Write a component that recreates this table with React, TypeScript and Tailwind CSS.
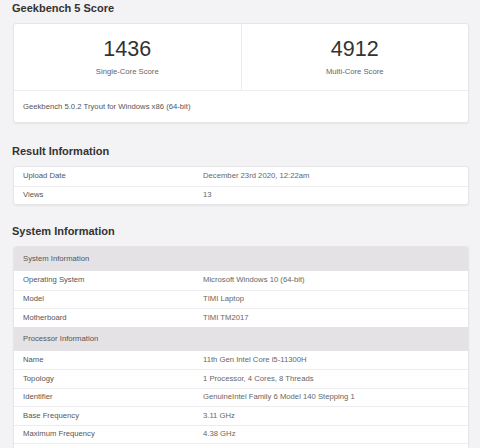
import React from 'react';

type Row = { label: string; value: string };

const resultRows: Row[] = [
  { label: 'Upload Date', value: 'December 23rd 2020, 12:22am' },
  { label: 'Views', value: '13' },
];

const systemRows: Row[] = [
  { label: 'Operating System', value: 'Microsoft Windows 10 (64-bit)' },
  { label: 'Model', value: 'TIMI Laptop' },
  { label: 'Motherboard', value: 'TIMI TM2017' },
];

const processorRows: Row[] = [
  { label: 'Name', value: '11th Gen Intel Core i5-11300H' },
  { label: 'Topology', value: '1 Processor, 4 Cores, 8 Threads' },
  { label: 'Identifier', value: 'GenuineIntel Family 6 Model 140 Stepping 1' },
  { label: 'Base Frequency', value: '3.11 GHz' },
  { label: 'Maximum Frequency', value: '4.38 GHz' },
];

const InfoRow: React.FC<{ row: Row; first?: boolean }> = ({ row, first }) => (
  <div
    className={`flex h-[18.5px] items-center text-[7.7px] text-[#555] ${
      first ? '' : 'border-t border-[#ececee]'
    }`}
  >
    <div className="w-[189px] shrink-0 pl-[9px]">{row.label}</div>
    <div className="flex-1 text-[#666]">{row.value}</div>
  </div>
);

const SectionHeader: React.FC<{ title: string }> = ({ title }) => (
  <div className="flex h-[24px] items-center bg-[#e4e2e4] pl-[9px] text-[7.7px] text-[#555]">
    {title}
  </div>
);

const Heading: React.FC<{ children: React.ReactNode }> = ({ children }) => (
  <h2 className="h-[16px] pl-[12px] text-[11px] leading-[16px] font-bold text-[#333]">{children}</h2>
);

const card =
  'mt-[7px] ml-[13px] mr-[11px] overflow-hidden rounded-[3px] border border-[#e6e5e8] bg-white shadow-[0_1px_2px_rgba(0,0,0,0.06)]';

export default function App() {
  return (
    <div
      className="h-[448px] w-[480px] overflow-hidden bg-[#f3f2f4]"
      style={{ fontFamily: '"Liberation Sans", Arial, sans-serif' }}
    >
      <Heading>Geekbench 5 Score</Heading>
      <div className={card}>
        <div className="flex h-[66px]">
          <div className="flex flex-1 flex-col items-center justify-center border-r border-[#ececee]">
            <div className="text-[21.5px] leading-[24px] text-[#333]">1436</div>
            <div className="mt-[5px] text-[7.7px] text-[#666]">Single-Core Score</div>
          </div>
          <div className="flex flex-1 flex-col items-center justify-center">
            <div className="text-[21.5px] leading-[24px] text-[#333]">4912</div>
            <div className="mt-[5px] text-[7.7px] text-[#666]">Multi-Core Score</div>
          </div>
        </div>
        <div className="flex h-[32px] items-center border-t border-[#ececee] pl-[9px] text-[7.7px] text-[#555]">
          Geekbench 5.0.2 Tryout for Windows x86 (64-bit)
        </div>
      </div>

      <div className="mt-[20px]">
        <Heading>Result Information</Heading>
      </div>
      <div className={card}>
        {resultRows.map((r, i) => (
          <InfoRow key={r.label} row={r} first={i === 0} />
        ))}
      </div>

      <div className="mt-[18px]">
        <Heading>System Information</Heading>
      </div>
      <div className={card}>
        <SectionHeader title="System Information" />
        {systemRows.map((r, i) => (
          <InfoRow key={r.label} row={r} first={i === 0} />
        ))}
        <SectionHeader title="Processor Information" />
        {processorRows.map((r, i) => (
          <InfoRow key={r.label} row={r} first={i === 0} />
        ))}
        <InfoRow row={{ label: '', value: '' }} />
      </div>
    </div>
  );
}
